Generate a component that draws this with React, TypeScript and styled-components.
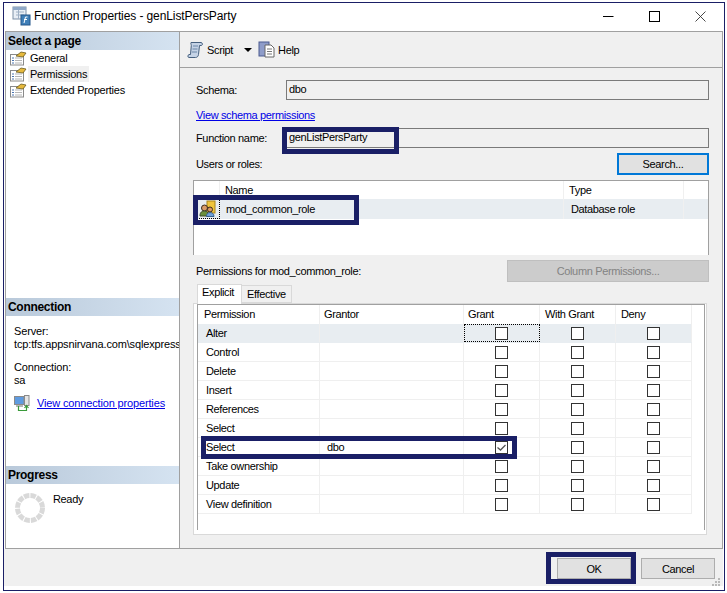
import React, { FC } from 'react';
import styled, { createGlobalStyle } from 'styled-components';

const NAVY = '#1a1f66';
const LINE = '#a0a0a0';
const PANEL = '#f0f0f0';

const GlobalStyle = createGlobalStyle`
  html, body {
    margin: 0;
    padding: 0;
    background: #fff;
  }
  * {
    box-sizing: border-box;
  }
`;

const Page = styled.div`
  position: relative;
  width: 727px;
  height: 593px;
  padding: 2px 0 0 3px;
  overflow: hidden;
  font-family: 'Liberation Sans', Arial, sans-serif;
  font-size: 11px;
  letter-spacing: -0.35px;
  color: #000;
`;

const Dialog = styled.div`
  width: 722px;
  height: 589px;
  border: 1px solid ${NAVY};
  display: flex;
  flex-direction: column;
  background: #fff;
`;

const TitleBar = styled.div`
  height: 28px;
  flex: none;
  display: flex;
  align-items: center;
  padding: 0 1px 2px 8px;
`;

const TitleText = styled.div`
  flex: 1;
  margin-left: 2px;
  font-size: 12px;
  letter-spacing: -0.1px;
`;

const WinButton = styled.div`
  width: 46px;
  display: flex;
  justify-content: center;
`;

const Body = styled.div`
  height: 518px;
  flex: none;
  margin: 0 1px;
  border: 1px solid ${LINE};
  display: flex;
`;

const Side = styled.div`
  width: 173px;
  flex: none;
  display: flex;
  flex-direction: column;
  background: #fff;
  overflow: hidden;
`;

const SideSection = styled.div<{ $height: number }>`
  height: ${(p) => p.$height}px;
  flex: none;
`;

const SideHeader = styled.div`
  height: 18px;
  padding-left: 2px;
  line-height: 18px;
  font-weight: bold;
  font-size: 12px;
  letter-spacing: -0.3px;
  background: linear-gradient(90deg, #b9c9da, #d5e3f1);
`;

const PageItem = styled.div<{ $active?: boolean }>`
  height: 16px;
  display: flex;
  align-items: center;
  padding-left: 3px;
  gap: 1px;
  letter-spacing: -0.25px;
  > span {
    padding: 0 2px;
    line-height: 16px;
    background: ${(p) => (p.$active ? PANEL : 'transparent')};
  }
`;

const ConnectionBody = styled.div`
  padding: 9px 0 0 8px;
  line-height: 13px;
  white-space: nowrap;
  letter-spacing: -0.15px;
`;

const InfoGroup = styled.div`
  & + & {
    margin-top: 10px;
  }
`;

const ConnectionLink = styled.div`
  display: flex;
  align-items: center;
  gap: 7px;
  height: 16px;
  margin-top: 8px;
`;

const Link = styled.span`
  color: #0000e6;
  text-decoration: underline;
`;

const ProgressBody = styled.div`
  display: flex;
  padding: 9px 0 0 9px;
  gap: 8px;
  > span {
    line-height: 13px;
  }
`;

const Main = styled.div`
  flex: 1;
  min-width: 0;
  border-left: 1px solid ${LINE};
  background: ${PANEL};
  display: flex;
  flex-direction: column;
`;

const Toolbar = styled.div`
  height: 36px;
  flex: none;
  border-bottom: 1px solid ${LINE};
  display: flex;
  align-items: center;
  padding-left: 7px;
`;

const ToolLabel = styled.span`
  margin-left: 3px;
`;

const ToolArrow = styled.span`
  width: 0;
  height: 0;
  margin: 0 6px 0 11px;
  border-style: solid;
  border-width: 4px 4px 0 4px;
  border-color: #000 transparent transparent transparent;
`;

const Content = styled.div`
  flex: 1;
  padding: 12px 13px 0 13px;
  display: flex;
  flex-direction: column;
`;

const FieldRow = styled.div`
  height: 20px;
  flex: none;
  display: flex;
  align-items: center;
  padding-left: 3px;
`;

const FieldLabel = styled.div`
  width: 90px;
  flex: none;
`;

const Field = styled.div`
  flex: 1;
  height: 20px;
  padding-left: 2px;
  line-height: 17px;
  border: 1px solid #7a7a7a;
  background: ${PANEL};
`;

const SchemaLink = styled.div`
  height: 14px;
  margin: 8px 0 6px;
  padding-left: 3px;
  line-height: 14px;
`;

const SplitRow = styled.div<{ $top: number }>`
  height: 22px;
  flex: none;
  margin-top: ${(p) => p.$top}px;
  padding-left: 3px;
  display: flex;
  align-items: center;
  justify-content: space-between;
`;

const Button = styled.div<{ $focus?: boolean; $disabled?: boolean; $width?: number }>`
  width: ${(p) => p.$width ?? 74}px;
  height: 22px;
  display: flex;
  align-items: center;
  justify-content: center;
  background: ${(p) => (p.$disabled ? '#cccccc' : '#e1e1e1')};
  color: ${(p) => (p.$disabled ? '#838383' : '#000')};
  border: ${(p) => (p.$focus ? '2px solid #0078d7' : p.$disabled ? '1px solid #bfbfbf' : '1px solid #adadad')};
`;

const RolesList = styled.div`
  height: 75px;
  flex: none;
  margin-top: 5px;
  background: #fff;
  border: 1px solid ${LINE};
  border-bottom: 0;
`;

const RoleRow = styled.div<{ $selected?: boolean }>`
  height: ${(p) => (p.$selected ? 20 : 18)}px;
  display: grid;
  grid-template-columns: 26px 344px 120px 1fr;
  background: ${(p) => (p.$selected ? '#e8edf1' : '#fff')};
`;

const RoleCell = styled.div<{ $pad: number }>`
  padding-left: ${(p) => p.$pad}px;
  display: flex;
  align-items: center;
  border-right: 1px solid #f0f0f0;
  white-space: nowrap;
`;

const RoleIcon = styled.div`
  display: flex;
  align-items: center;
  padding-left: 5px;
  border-right: 1px dotted #000;
  border-bottom: 1px dotted #000;
`;

const TabStrip = styled.div`
  height: 20px;
  flex: none;
  margin-top: 1px;
  padding-left: 4px;
  display: flex;
  align-items: flex-end;
`;

const Tab = styled.div<{ $active?: boolean }>`
  height: ${(p) => (p.$active ? 20 : 18)}px;
  width: ${(p) => (p.$active ? 45 : 50)}px;
  margin-bottom: ${(p) => (p.$active ? -1 : 0)}px;
  position: relative;
  padding-left: ${(p) => (p.$active ? 4 : 5)}px;
  line-height: ${(p) => (p.$active ? 15 : 16)}px;
  border: 1px solid #d9d9d9;
  border-bottom: ${(p) => (p.$active ? 0 : '1px solid #d9d9d9')};
  border-left-width: ${(p) => (p.$active ? 1 : 0)}px;
  background: ${(p) => (p.$active ? '#fff' : PANEL)};
`;

const TabPage = styled.div`
  height: 232px;
  flex: none;
  margin-right: 2px;
  padding: 0 1px 4px 3px;
  border: 1px solid #d9d9d9;
  background: #fff;
`;

const Grid = styled.div`
  height: 100%;
  border: 1px solid ${LINE};
  border-bottom: 0;
`;

const GridRow = styled.div<{ $selected?: boolean }>`
  height: 19px;
  width: 494px;
  display: grid;
  grid-template-columns: 122px 144px 76px 76px 76px;
  background: ${(p) => (p.$selected ? '#e8edf1' : '#fff')};
  border-bottom: 1px solid ${(p) => (p.$selected ? '#e8edf1' : '#efefef')};
`;

const HeaderRow = styled(GridRow)`
  border-bottom: 0;
  > div {
    padding-bottom: 2px;
  }
`;

const GridCell = styled.div<{ $pad: number }>`
  padding-left: ${(p) => p.$pad}px;
  display: flex;
  align-items: center;
  border-right: 1px solid #efefef;
  white-space: nowrap;
`;

const CheckCell = styled.div<{ $focus?: boolean }>`
  display: flex;
  align-items: center;
  justify-content: center;
  border-right: 1px solid #efefef;
  outline: ${(p) => (p.$focus ? '1px dotted #000' : 'none')};
  outline-offset: -1px;
`;

const CheckBox = styled.div`
  width: 13px;
  height: 13px;
  border: 1px solid #333;
  background: #fff;
  display: flex;
  align-items: center;
  justify-content: center;
`;

const Footer = styled.div`
  height: 37px;
  flex: none;
  margin-right: 1px;
  padding: 9px 8px 0 0;
  background: ${PANEL};
  display: flex;
  justify-content: flex-end;
  gap: 10px;
`;

const FooterButton = styled(Button)`
  height: 21px;
`;

const Grip = styled.svg`
  position: absolute;
  left: 712px;
  top: 578px;
`;

const Highlight = styled.div<{ $x: number; $y: number; $w: number; $h: number }>`
  position: absolute;
  left: ${(p) => p.$x}px;
  top: ${(p) => p.$y}px;
  width: ${(p) => p.$w}px;
  height: ${(p) => p.$h}px;
  border: 5px solid ${NAVY};
  pointer-events: none;
`;

const TitleIcon = () => (
  <svg width="20" height="20" viewBox="0 0 20 20">
    <rect x="1" y="1" width="13" height="12" fill="#e8eef5" stroke="#7d8fa6" />
    <rect x="1" y="1" width="13" height="3" fill="#8fa8c8" />
    <path d="M4 6h8M4 9h8M6.500 4v9" stroke="#9fb0c4" />
    <rect x="9" y="9" width="9" height="10" fill="#3f7fb8" stroke="#24568a" />
    <path d="M12 17l1.500-6h2M12 13.500h3" stroke="#fff" fill="none" />
  </svg>
);

const PageIcon = () => (
  <svg width="18" height="16" viewBox="0 0 18 16">
    <rect x="1.500" y="4.500" width="13" height="10.500" fill="#fff" stroke="#8a8a8a" />
    <path d="M3 8h2M3 10.500h2M3 13h2" stroke="#4a74b0" />
    <path d="M6 8h7M6 10.500h7M6 13h7" stroke="#b5b5b5" />
    <path d="M7 6l5-4 5 1-3 4z" fill="#e6b93c" stroke="#6a5a20" strokeWidth="0.8" />
  </svg>
);

const ScriptIcon = () => (
  <svg width="17" height="18" viewBox="0 0 17 18">
    <path
      d="M4 1.500h10c1.500 0 2 2.500.5 3h-2l-1 9c-.2 2-1.500 3-3 3H2c-1.500 0-1.500-2.500 0-3h1.500l.8-9c.1-1-.8-1.500-.3-3z"
      fill="#c5d3e6"
      stroke="#46607f"
    />
    <path d="M6 5h5M5.500 8h5M5 11h5" stroke="#6b86a8" />
  </svg>
);

const HelpIcon = () => (
  <svg width="17" height="17" viewBox="0 0 17 17">
    <rect x="1" y="1" width="10" height="14" fill="#8e9cc9" stroke="#4b5a8f" />
    <path d="M7 4h6l3 3v9H7z" fill="#fff" stroke="#666" />
    <path d="M9 8h5M9 10.500h5M9 13h5" stroke="#777" />
  </svg>
);

const UsersIcon = () => (
  <svg width="17" height="17" viewBox="0 0 17 17">
    <rect x="8" y="1" width="8" height="12" fill="#f0c53c" stroke="#a5821c" />
    <circle cx="5.500" cy="8" r="3" fill="#d99a68" stroke="#3a2a1c" />
    <path d="M1 16c0-4 2-5 4.500-5s4 1.500 4 5z" fill="#6a8f3c" stroke="#3a4a2c" />
    <circle cx="11" cy="9.500" r="2.500" fill="#d99a68" stroke="#3a2a1c" />
    <path d="M7.500 16.500c0-3 1.500-4 3.500-4s4 1 4 4z" fill="#6fa0d8" stroke="#37608f" />
  </svg>
);

const ConnectionIcon = () => (
  <svg width="16" height="17" viewBox="0 0 16 17">
    <rect x="0.500" y="1.500" width="9.500" height="8" fill="#5f9be0" stroke="#8a8a8a" />
    <rect x="10.500" y="0.500" width="4.500" height="10" fill="#e4e4e4" stroke="#8a8a8a" />
    <rect x="2" y="10" width="7" height="2" fill="#b5b5b5" />
    <path d="M4.500 11v4.500h8V11M10.500 13l2-2.500 2 2.500" stroke="#3a9a3a" fill="none" strokeWidth="1.200" />
  </svg>
);

const Spinner = () => (
  <svg width="30" height="30" viewBox="0 0 30 30">
    <circle cx="15" cy="15" r="12.500" fill="none" stroke="#d9d9d9" strokeWidth="5" strokeDasharray="5.500 1.050" />
  </svg>
);

const Check = () => (
  <svg width="11" height="11" viewBox="0 0 11 11">
    <path d="M1.500 5.500l3 2.500 5-5" fill="none" stroke="#555" strokeWidth="1.300" />
  </svg>
);

const permissions = [
  'Alter',
  'Control',
  'Delete',
  'Insert',
  'References',
  'Select',
  'Select',
  'Take ownership',
  'Update',
  'View definition',
];

const App: FC = () => {
  return (
    <Page>
      <GlobalStyle />
      <Dialog>
        <TitleBar>
          <TitleIcon />
          <TitleText>Function Properties - genListPersParty</TitleText>
          <WinButton>
            <svg width="11" height="11" viewBox="0 0 11 11">
              <path d="M0 5.500h10.500" stroke="#000" />
            </svg>
          </WinButton>
          <WinButton>
            <svg width="11" height="11" viewBox="0 0 11 11">
              <rect x="0.500" y="0.500" width="10" height="10" fill="none" stroke="#000" />
            </svg>
          </WinButton>
          <WinButton>
            <svg width="11" height="11" viewBox="0 0 11 11">
              <path d="M.5.500l10 10M10.500.500l-10 10" stroke="#333" strokeWidth="0.900" />
            </svg>
          </WinButton>
        </TitleBar>
        <Body>
          <Side>
            <SideSection $height={266}>
              <SideHeader>Select a page</SideHeader>
              <PageItem>
                <PageIcon />
                <span>General</span>
              </PageItem>
              <PageItem $active>
                <PageIcon />
                <span>Permissions</span>
              </PageItem>
              <PageItem>
                <PageIcon />
                <span>Extended Properties</span>
              </PageItem>
            </SideSection>
            <SideSection $height={168}>
              <SideHeader>Connection</SideHeader>
              <ConnectionBody>
                <InfoGroup>
                  Server:
                  <br />
                  tcp:tfs.appsnirvana.com\sqlexpress
                </InfoGroup>
                <InfoGroup>
                  Connection:
                  <br />
                  sa
                </InfoGroup>
                <ConnectionLink>
                  <ConnectionIcon />
                  <Link>View connection properties</Link>
                </ConnectionLink>
              </ConnectionBody>
            </SideSection>
            <SideSection $height={82}>
              <SideHeader>Progress</SideHeader>
              <ProgressBody>
                <Spinner />
                <span>Ready</span>
              </ProgressBody>
            </SideSection>
          </Side>
          <Main>
            <Toolbar>
              <ScriptIcon />
              <ToolLabel>Script</ToolLabel>
              <ToolArrow />
              <HelpIcon />
              <ToolLabel>Help</ToolLabel>
            </Toolbar>
            <Content>
              <FieldRow>
                <FieldLabel>Schema:</FieldLabel>
                <Field>dbo</Field>
              </FieldRow>
              <SchemaLink>
                <Link>View schema permissions</Link>
              </SchemaLink>
              <FieldRow>
                <FieldLabel>Function name:</FieldLabel>
                <Field>genListPersParty</Field>
              </FieldRow>
              <SplitRow $top={5}>
                <span>Users or roles:</span>
                <Button $focus $width={92}>
                  Search...
                </Button>
              </SplitRow>
              <RolesList>
                <RoleRow>
                  <RoleCell $pad={0} />
                  <RoleCell $pad={5}>Name</RoleCell>
                  <RoleCell $pad={5}>Type</RoleCell>
                </RoleRow>
                <RoleRow $selected>
                  <RoleIcon>
                    <UsersIcon />
                  </RoleIcon>
                  <RoleCell $pad={6}>mod_common_role</RoleCell>
                  <RoleCell $pad={7}>Database role</RoleCell>
                </RoleRow>
              </RolesList>
              <SplitRow $top={5}>
                <span>Permissions for mod_common_role:</span>
                <Button $disabled $width={202}>
                  Column Permissions...
                </Button>
              </SplitRow>
              <TabStrip>
                <Tab $active>Explicit</Tab>
                <Tab>Effective</Tab>
              </TabStrip>
              <TabPage>
                <Grid>
                  <HeaderRow>
                    <GridCell $pad={6}>Permission</GridCell>
                    <GridCell $pad={4}>Grantor</GridCell>
                    <GridCell $pad={4}>Grant</GridCell>
                    <GridCell $pad={5}>With Grant</GridCell>
                    <GridCell $pad={5}>Deny</GridCell>
                  </HeaderRow>
                  {permissions.map((name, i) => (
                    <GridRow key={i} $selected={i === 0}>
                      <GridCell $pad={8}>{name}</GridCell>
                      <GridCell $pad={7}>{i === 6 ? 'dbo' : ''}</GridCell>
                      <CheckCell $focus={i === 0}>
                        <CheckBox>{i === 6 && <Check />}</CheckBox>
                      </CheckCell>
                      <CheckCell>
                        <CheckBox />
                      </CheckCell>
                      <CheckCell>
                        <CheckBox />
                      </CheckCell>
                    </GridRow>
                  ))}
                </Grid>
              </TabPage>
            </Content>
          </Main>
        </Body>
        <Footer>
          <FooterButton>OK</FooterButton>
          <FooterButton>Cancel</FooterButton>
        </Footer>
      </Dialog>
      <Grip width="9" height="8" viewBox="0 0 9 8">
        <path d="M6 0h2v2H6zM3 3h2v2H3zM6 3h2v2H6zM0 6h2v2H0zM3 6h2v2H3zM6 6h2v2H6z" fill="#b8b8b8" />
      </Grip>
      <Highlight $x={282} $y={127} $w={117} $h={27} />
      <Highlight $x={193} $y={195} $w={166} $h={30} />
      <Highlight $x={201} $y={436} $w={316} $h={23} />
      <Highlight $x={546} $y={552} $w={90} $h={32} />
    </Page>
  );
};

export default App;
